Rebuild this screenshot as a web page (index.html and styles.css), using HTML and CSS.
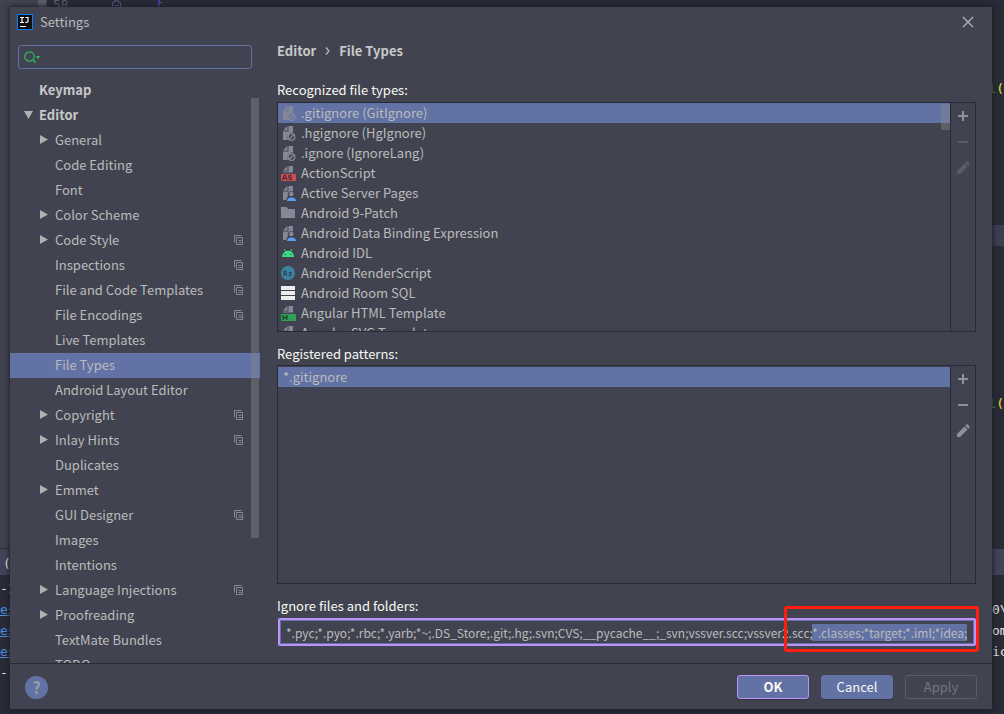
FILE: index.html
```html
<!DOCTYPE html>
<html lang="en">
<head>
<meta charset="utf-8">
<title>Settings</title>
<link rel="stylesheet" href="styles.css">
</head>
<body>
<svg class="defs" aria-hidden="true">
  <symbol id="copy" viewBox="0 0 10 10"><path d="M0.500 7.500V0.500H7.500M2.500 2.500h6v7h-6zM4.500 5.500h3M4.500 7.500h3" fill="none" stroke="currentColor"/></symbol>
  <symbol id="closed" viewBox="0 0 8 9"><path d="M0 0v9l8-4.500z" fill="currentColor"/></symbol>
  <symbol id="open" viewBox="0 0 9 8"><path d="M0 0h9L4.500 8z" fill="currentColor"/></symbol>
  <symbol id="ignored" viewBox="0 0 16 16"><path d="M2 5.500 6.500 1v4.500zM7.500 1H12v6.500a5 5 0 0 0-5 7.500H2V6.500h5.500z" fill="#868995"/><circle cx="10.500" cy="12" r="3.300" fill="none" stroke="#868995" stroke-width="1.300"/><path d="m8.300 14.300 4.500-4.600" stroke="#868995" stroke-width="1.300"/></symbol>
  <symbol id="person" viewBox="0 0 16 16"><path d="M2 5.500 6.500 1v4.500zM7.500 1H12v5.500a3.500 3.500 0 0 0-5 4.500l-2 4H2V6.500h5.500z" fill="#868995"/><circle cx="10.300" cy="9" r="2.300" fill="#868995"/><path d="M6 16c0-2.500 2-3.500 4.500-3.500S15 13.500 15 16z" fill="#589df6"/></symbol>
  <symbol id="as" viewBox="0 0 16 16"><path d="M2 5.500 6.500 1v4.500zM7.500 1H12v6.500H2v-1h5.500z" fill="#868995"/><path d="M0 9h15v7H0z" fill="#c75056"/><path d="m1.500 15 1.800-4.500h1L6 15M2.500 13.500h2.800M10.500 10.500H8v1.900h2.200v2.100H7.500" fill="none" stroke="#51252a" stroke-width="1.100"/></symbol>
  <symbol id="html" viewBox="0 0 16 16"><path d="M2 5.500 6.500 1v4.500zM7.500 1H12v6.500H2v-1h5.500z" fill="#868995"/><path d="M0 9h15v7H0z" fill="#2fa05a"/><path d="M2.200 10v5M5.800 10v5M2.200 12.500h3.600" stroke="#17462b" stroke-width="1.300"/></symbol>
  <symbol id="folder" viewBox="0 0 16 16"><path d="M0 2h5.500l1.500 2h7v9H0z" fill="#868995"/></symbol>
  <symbol id="android" viewBox="0 0 16 16"><path d="M1 12c.3-3 1.500-4.600 3.300-5.500L3 4.400l.7-.4L5 6.100a8 8 0 0 1 4.300 0L10.600 4l.7.400L10 6.500c1.800.9 2.900 2.500 3 5.500z" fill="#3ddc84"/><circle cx="4.300" cy="9.400" r=".7" fill="#414450"/><circle cx="9.700" cy="9.400" r=".7" fill="#414450"/></symbol>
  <symbol id="rs" viewBox="0 0 16 16"><circle cx="7" cy="8" r="7" fill="#3b83a1"/><path d="M3 11V6h1.300a1.300 1.300 0 0 1 0 2.600H3M4.500 8.600 6 11M10.800 7.500H9c-1.300 0-1.300 1.500 0 1.600 1.600.1 1.600 1.500.2 1.500H7.700" fill="none" stroke="#203c52"/></symbol>
  <symbol id="rows" viewBox="0 0 16 16"><path d="M0 1h14v4H0zM0 6h14v4H0zM0 11h14v4H0z" fill="#ededed"/></symbol>
  <symbol id="plus" viewBox="0 0 16 16"><path d="M3 8h10M8 3v10" stroke="currentColor" stroke-width="2"/></symbol>
  <symbol id="minus" viewBox="0 0 16 16"><path d="M3 8h10" stroke="currentColor" stroke-width="2"/></symbol>
  <symbol id="pencil" viewBox="0 0 16 16"><path d="M2 11 9.500 3.500l3 3L5 14H2zM10.300 2.700l.9-.9c.6-.6 1.300-.6 1.900 0l1.100 1.100c.6.6.6 1.300 0 1.900l-.9.9z" fill="currentColor"/></symbol>
</svg>

<div class="backdrop" aria-hidden="true">
  <div class="editor">
    <div class="gutter"><span>58</span></div>
    <div class="code">
      <svg class="fold" width="9" height="8"><path d="M.5 8V3L4.500 0l4 3v5M2 5.500h5" fill="none" stroke="#65688f"/></svg>
      <span class="brace">}</span>
      <span class="call call-one"><i>l</i>()</span>
      <span class="current-line"></span>
      <span class="call call-two"><i>l</i>()</span>
    </div>
  </div>
  <div class="run-tab">(4)</div>
  <div class="console">
    <div><span>-1</span></div>
    <div><u>es</u><span>0\</span></div>
    <div><u>es</u><span>om</span></div>
    <div><u>es</u><span>ic</span></div>
    <div><span>--</span></div>
  </div>
</div>

<main class="dialog">
  <header class="titlebar">
    <svg width="16" height="16" viewBox="0 0 16 16"><path d="M.5.5h15v15H.5z" fill="#101012" stroke="#087cfa"/><path d="M3 3.500h4M3 8.500h4M5 3.500v5M8.500 3.500h2.500V7c0 1.300-1.500 1.700-2.700 1M3 12.500h6" fill="none" stroke="#fff" stroke-width="1.200"/></svg>
    <h1>Settings</h1>
    <button class="close" aria-label="Close"><svg width="12" height="12" viewBox="0 0 12 12"><path d="m1 1 10 10M11 1 1 11" stroke="#bbb" stroke-width="1.100"/></svg></button>
  </header>
  <div class="body">
    <aside class="sidebar">
      <label class="search">
        <svg width="18" height="13" viewBox="0 0 18 13"><circle cx="5.500" cy="5.500" r="4.700" fill="none" stroke="#2fb562" stroke-width="1.300"/><path d="m8.700 8.800 3 3" stroke="#2fb562" stroke-width="1.500"/><path d="M11.500 5h5l-2.500 3z" fill="#2fb562"/></svg>
        <input type="text" aria-label="Search settings">
      </label>
      <nav class="tree">
        <ul>
          <li class="top"><b>Keymap</b></li>
          <li class="top"><svg class="arrow" width="9" height="8"><use href="#open"/></svg><b>Editor</b></li>
          <li><svg class="arrow" width="8" height="9"><use href="#closed"/></svg><span>General</span></li>
          <li><span>Code Editing</span></li>
          <li><span>Font</span></li>
          <li><svg class="arrow" width="8" height="9"><use href="#closed"/></svg><span>Color Scheme</span></li>
          <li><svg class="arrow" width="8" height="9"><use href="#closed"/></svg><span>Code Style</span><svg class="copy" width="10" height="10"><use href="#copy"/></svg></li>
          <li><span>Inspections</span><svg class="copy" width="10" height="10"><use href="#copy"/></svg></li>
          <li><span>File and Code Templates</span><svg class="copy" width="10" height="10"><use href="#copy"/></svg></li>
          <li><span>File Encodings</span><svg class="copy" width="10" height="10"><use href="#copy"/></svg></li>
          <li><span>Live Templates</span></li>
          <li class="selected"><span>File Types</span></li>
          <li><span>Android Layout Editor</span></li>
          <li><svg class="arrow" width="8" height="9"><use href="#closed"/></svg><span>Copyright</span><svg class="copy" width="10" height="10"><use href="#copy"/></svg></li>
          <li><svg class="arrow" width="8" height="9"><use href="#closed"/></svg><span>Inlay Hints</span><svg class="copy" width="10" height="10"><use href="#copy"/></svg></li>
          <li><span>Duplicates</span></li>
          <li><svg class="arrow" width="8" height="9"><use href="#closed"/></svg><span>Emmet</span></li>
          <li><span>GUI Designer</span><svg class="copy" width="10" height="10"><use href="#copy"/></svg></li>
          <li><span>Images</span></li>
          <li><span>Intentions</span></li>
          <li><svg class="arrow" width="8" height="9"><use href="#closed"/></svg><span>Language Injections</span><svg class="copy" width="10" height="10"><use href="#copy"/></svg></li>
          <li><svg class="arrow" width="8" height="9"><use href="#closed"/></svg><span>Proofreading</span></li>
          <li><span>TextMate Bundles</span></li>
          <li><span>TODO</span></li>
        </ul>
        <div class="thumb tree-thumb"></div>
      </nav>
    </aside>
    <section class="content">
      <h2 class="crumbs"><span>Editor</span><svg width="5" height="8" viewBox="0 0 5 8"><path d="m1 .5 3 3.500-3 3.500" fill="none" stroke="#bbb" stroke-width="1.200"/></svg><span>File Types</span></h2>
      <h3 class="label">Recognized file types:</h3>
      <div class="panel types">
        <ul class="list">
          <li class="selected"><svg width="16" height="16"><use href="#ignored"/></svg>.gitignore (GitIgnore)</li>
          <li><svg width="16" height="16"><use href="#ignored"/></svg>.hgignore (HgIgnore)</li>
          <li><svg width="16" height="16"><use href="#ignored"/></svg>.ignore (IgnoreLang)</li>
          <li><svg width="16" height="16"><use href="#as"/></svg>ActionScript</li>
          <li><svg width="16" height="16"><use href="#person"/></svg>Active Server Pages</li>
          <li><svg width="16" height="16"><use href="#folder"/></svg>Android 9-Patch</li>
          <li><svg width="16" height="16"><use href="#person"/></svg>Android Data Binding Expression</li>
          <li><svg width="16" height="16"><use href="#android"/></svg>Android IDL</li>
          <li><svg width="16" height="16"><use href="#rs"/></svg>Android RenderScript</li>
          <li><svg width="16" height="16"><use href="#rows"/></svg>Android Room SQL</li>
          <li><svg width="16" height="16"><use href="#html"/></svg>Angular HTML Template</li>
          <li><svg width="16" height="16"><use href="#html"/></svg>Angular SVG Template</li>
        </ul>
        <div class="thumb list-thumb"></div>
        <div class="tools">
          <button aria-label="Add type"><svg width="16" height="16"><use href="#plus"/></svg></button>
          <button aria-label="Remove type" disabled><svg width="16" height="16"><use href="#minus"/></svg></button>
          <button aria-label="Edit type" disabled><svg width="16" height="16"><use href="#pencil"/></svg></button>
        </div>
      </div>
      <h3 class="label">Registered patterns:</h3>
      <div class="panel patterns">
        <ul class="list">
          <li class="selected">*.gitignore</li>
        </ul>
        <div class="tools">
          <button aria-label="Add pattern"><svg width="16" height="16"><use href="#plus"/></svg></button>
          <button aria-label="Remove pattern"><svg width="16" height="16"><use href="#minus"/></svg></button>
          <button aria-label="Edit pattern"><svg width="16" height="16"><use href="#pencil"/></svg></button>
        </div>
      </div>
      <label class="label" for="ignore">Ignore files and folders:</label>
      <div class="field">
        <input id="ignore" type="text" spellcheck="false" value="*.pyc;*.pyo;*.rbc;*.yarb;*~;.DS_Store;.git;.hg;.svn;CVS;__pycache__;_svn;vssver.scc;vssver2.scc;*.classes;*target;*.iml;*idea;">
        <div class="highlight"></div>
      </div>
    </section>
  </div>
  <footer class="footer">
    <button class="help" aria-label="Help">?</button>
    <button class="btn primary">OK</button>
    <button class="btn">Cancel</button>
    <button class="btn" disabled>Apply</button>
  </footer>
</main>
<script src="script.js"></script>
</body>
</html>
```

FILE: styles.css
```css
* { box-sizing: border-box; }

body {
  margin: 0;
  height: 100vh;
  overflow: hidden;
  position: relative;
  background: #282a36;
  color: #bbb;
  font: 13px/20px "Noto Sans CJK SC", "Open Sans", sans-serif;
}

ul, h1, h2, h3 { margin: 0; padding: 0; list-style: none; font-size: 13px; font-weight: 400; }
button, input { font: inherit; color: inherit; margin: 0; }
svg { flex: none; display: block; }
.defs { position: absolute; width: 0; height: 0; }

/* IDE behind the dialog */
.backdrop {
  height: 100%;
  display: flex;
  flex-direction: column;
  font: 13px/21px "DejaVu Sans Mono", monospace;
}
.editor { flex: 1; display: flex; overflow: hidden; }
.gutter { width: 48px; background: #414450; border-right: 1px solid #282a36; position: relative; }
.gutter::after { content: ""; position: absolute; left: 38px; top: 0; width: 8px; height: 8px; background: #5c5e66; }
.gutter span { position: absolute; left: 53px; top: -6px; color: #5c6074; }
.code { flex: 1; position: relative; }
.fold { position: absolute; left: 64px; top: 0; }
.brace { position: absolute; left: 107px; top: -8px; color: #4d55d8; }
.call { position: absolute; right: -8px; color: #f1e03a; white-space: nowrap; }
.call i { color: #50a14f; font-style: normal; }
.call-one { top: 78px; }
.call-two { top: 393px; }
.current-line { position: absolute; right: 0; top: 225px; width: 40px; height: 21px; background: #3c3f52; }
.run-tab { height: 27px; padding: 4px 3px; background: #414458; border-top: 1px solid #282a36; color: #eee; }
.console { height: 139px; padding-top: 3px; overflow: hidden; color: #e6e6e6; }
.console div { display: flex; justify-content: space-between; height: 21px; }
.console u { color: #4a8fe0; }
.console u + span { width: 12px; white-space: nowrap; }

/* Dialog */
.dialog {
  position: absolute;
  inset: 7px 12px 5px 10px;
  display: flex;
  flex-direction: column;
  background: #414450;
  box-shadow: 0 0 5px 1px #1d1e27;
}
.titlebar { display: flex; align-items: center; gap: 7px; height: 29px; padding: 0 18px 0 7px; }
.close { margin-left: auto; padding: 0; border: 0; background: none; }
.body { flex: 1; min-height: 0; display: flex; }

.sidebar { width: 250px; display: flex; flex-direction: column; padding-top: 9px; }
.search {
  display: flex;
  align-items: center;
  height: 24px;
  margin: 0 8px;
  padding-left: 5px;
  border: 1px solid #6272a4;
  border-radius: 3px;
}
.search input { flex: 1; min-width: 0; border: 0; outline: 0; background: none; }
.tree { flex: 1; min-height: 0; padding-top: 9px; position: relative; overflow: hidden; }
.tree li { display: flex; align-items: center; height: 25px; padding: 0 16px 2px 29px; }
.tree li > span { margin-left: 16px; }
.tree .arrow { margin-left: 1px; }
.tree .arrow + span { margin-left: 7px; }
.tree .top { padding-left: 13px; }
.tree .top b { margin-left: 16px; }
.tree .top .arrow + b { margin-left: 6px; }
.tree b { color: #c8c8c8; }
.arrow { color: #b0b0b0; }
.copy { margin-left: auto; color: #858894; }
.selected { background: #6272a4; }
.thumb { position: absolute; background: rgba(140, 143, 140, .38); }
.tree-thumb { right: 1px; top: 29px; width: 8px; height: 440px; }

.content { flex: 1; min-width: 0; display: flex; flex-direction: column; padding: 5px 16px 17px 17px; }
.crumbs { display: flex; align-items: center; gap: 9px; font-weight: 700; color: #c8c8c8; }
.label { color: #f8f8f2; line-height: 20px; }
.crumbs + .label { margin-top: 19px; }
.panel { display: flex; min-height: 0; position: relative; border: 1px solid #282a36; }
.types { flex: 230 1 0; margin: 2px 0 12px; }
.patterns { flex: 219 1 0; margin: 1px 0 12px; }
.patterns .list { padding-top: 1px; }
.list { flex: 1; min-width: 0; overflow: hidden; }
.list li { display: flex; align-items: center; gap: 4px; height: 20px; padding-left: 3px; }
.patterns .list li { padding-left: 5px; }
.list-thumb { right: 25px; top: 1px; width: 9px; height: 26px; }
.tools { width: 25px; border-left: 1px solid #282a36; padding-top: 5px; display: flex; flex-direction: column; gap: 10px; }
.tools button { display: flex; justify-content: center; padding: 0; border: 0; background: none; color: #8d909c; }
.tools button:disabled { color: #5d5d60; }

.field { position: relative; margin: 2px 0 0 1px; }
.field input {
  display: block;
  width: 100%;
  height: 28px;
  padding: 0 2px 0 6px;
  border: 2px solid #bd93f9;
  border-radius: 2px;
  outline: 1px solid #6272a4;
  outline-offset: -3px;
  background: #414450;
  font-size: 12px;
}
.field input::selection { background: #6272a4; color: #bbb; }
.highlight {
  position: absolute;
  right: -3px;
  top: -12px;
  width: 195px;
  height: 46px;
  border: 3px solid #ff1f0f;
  border-radius: 3px;
  pointer-events: none;
}

.footer {
  display: flex;
  align-items: center;
  gap: 12px;
  height: 46px;
  padding: 1px 15px 0;
  border-top: 1px solid #282a36;
}
.help {
  width: 23px;
  height: 23px;
  margin-right: auto;
  padding: 0;
  border: 0;
  border-radius: 50%;
  background: #6272a4;
  color: #9a9da6;
  font-size: 16px;
  font-weight: 600;
  line-height: 23px;
}
.btn {
  width: 72px;
  height: 24px;
  padding: 0;
  border: 1px solid #6272a4;
  border-radius: 3px;
  background: #6272a4;
  color: #f8f8f2;
  line-height: 22px;
  box-shadow: 0 1px 1px #343640;
}
.primary { border-color: #bd93f9; font-weight: 700; }
.btn:disabled { background: none; border-color: #5b5e66; color: #73767d; box-shadow: none; }
```

FILE: script.js
```js
const ignore = document.getElementById("ignore");
const start = ignore.value.indexOf("*.classes");
ignore.focus();
ignore.setSelectionRange(start, ignore.value.length);
```
